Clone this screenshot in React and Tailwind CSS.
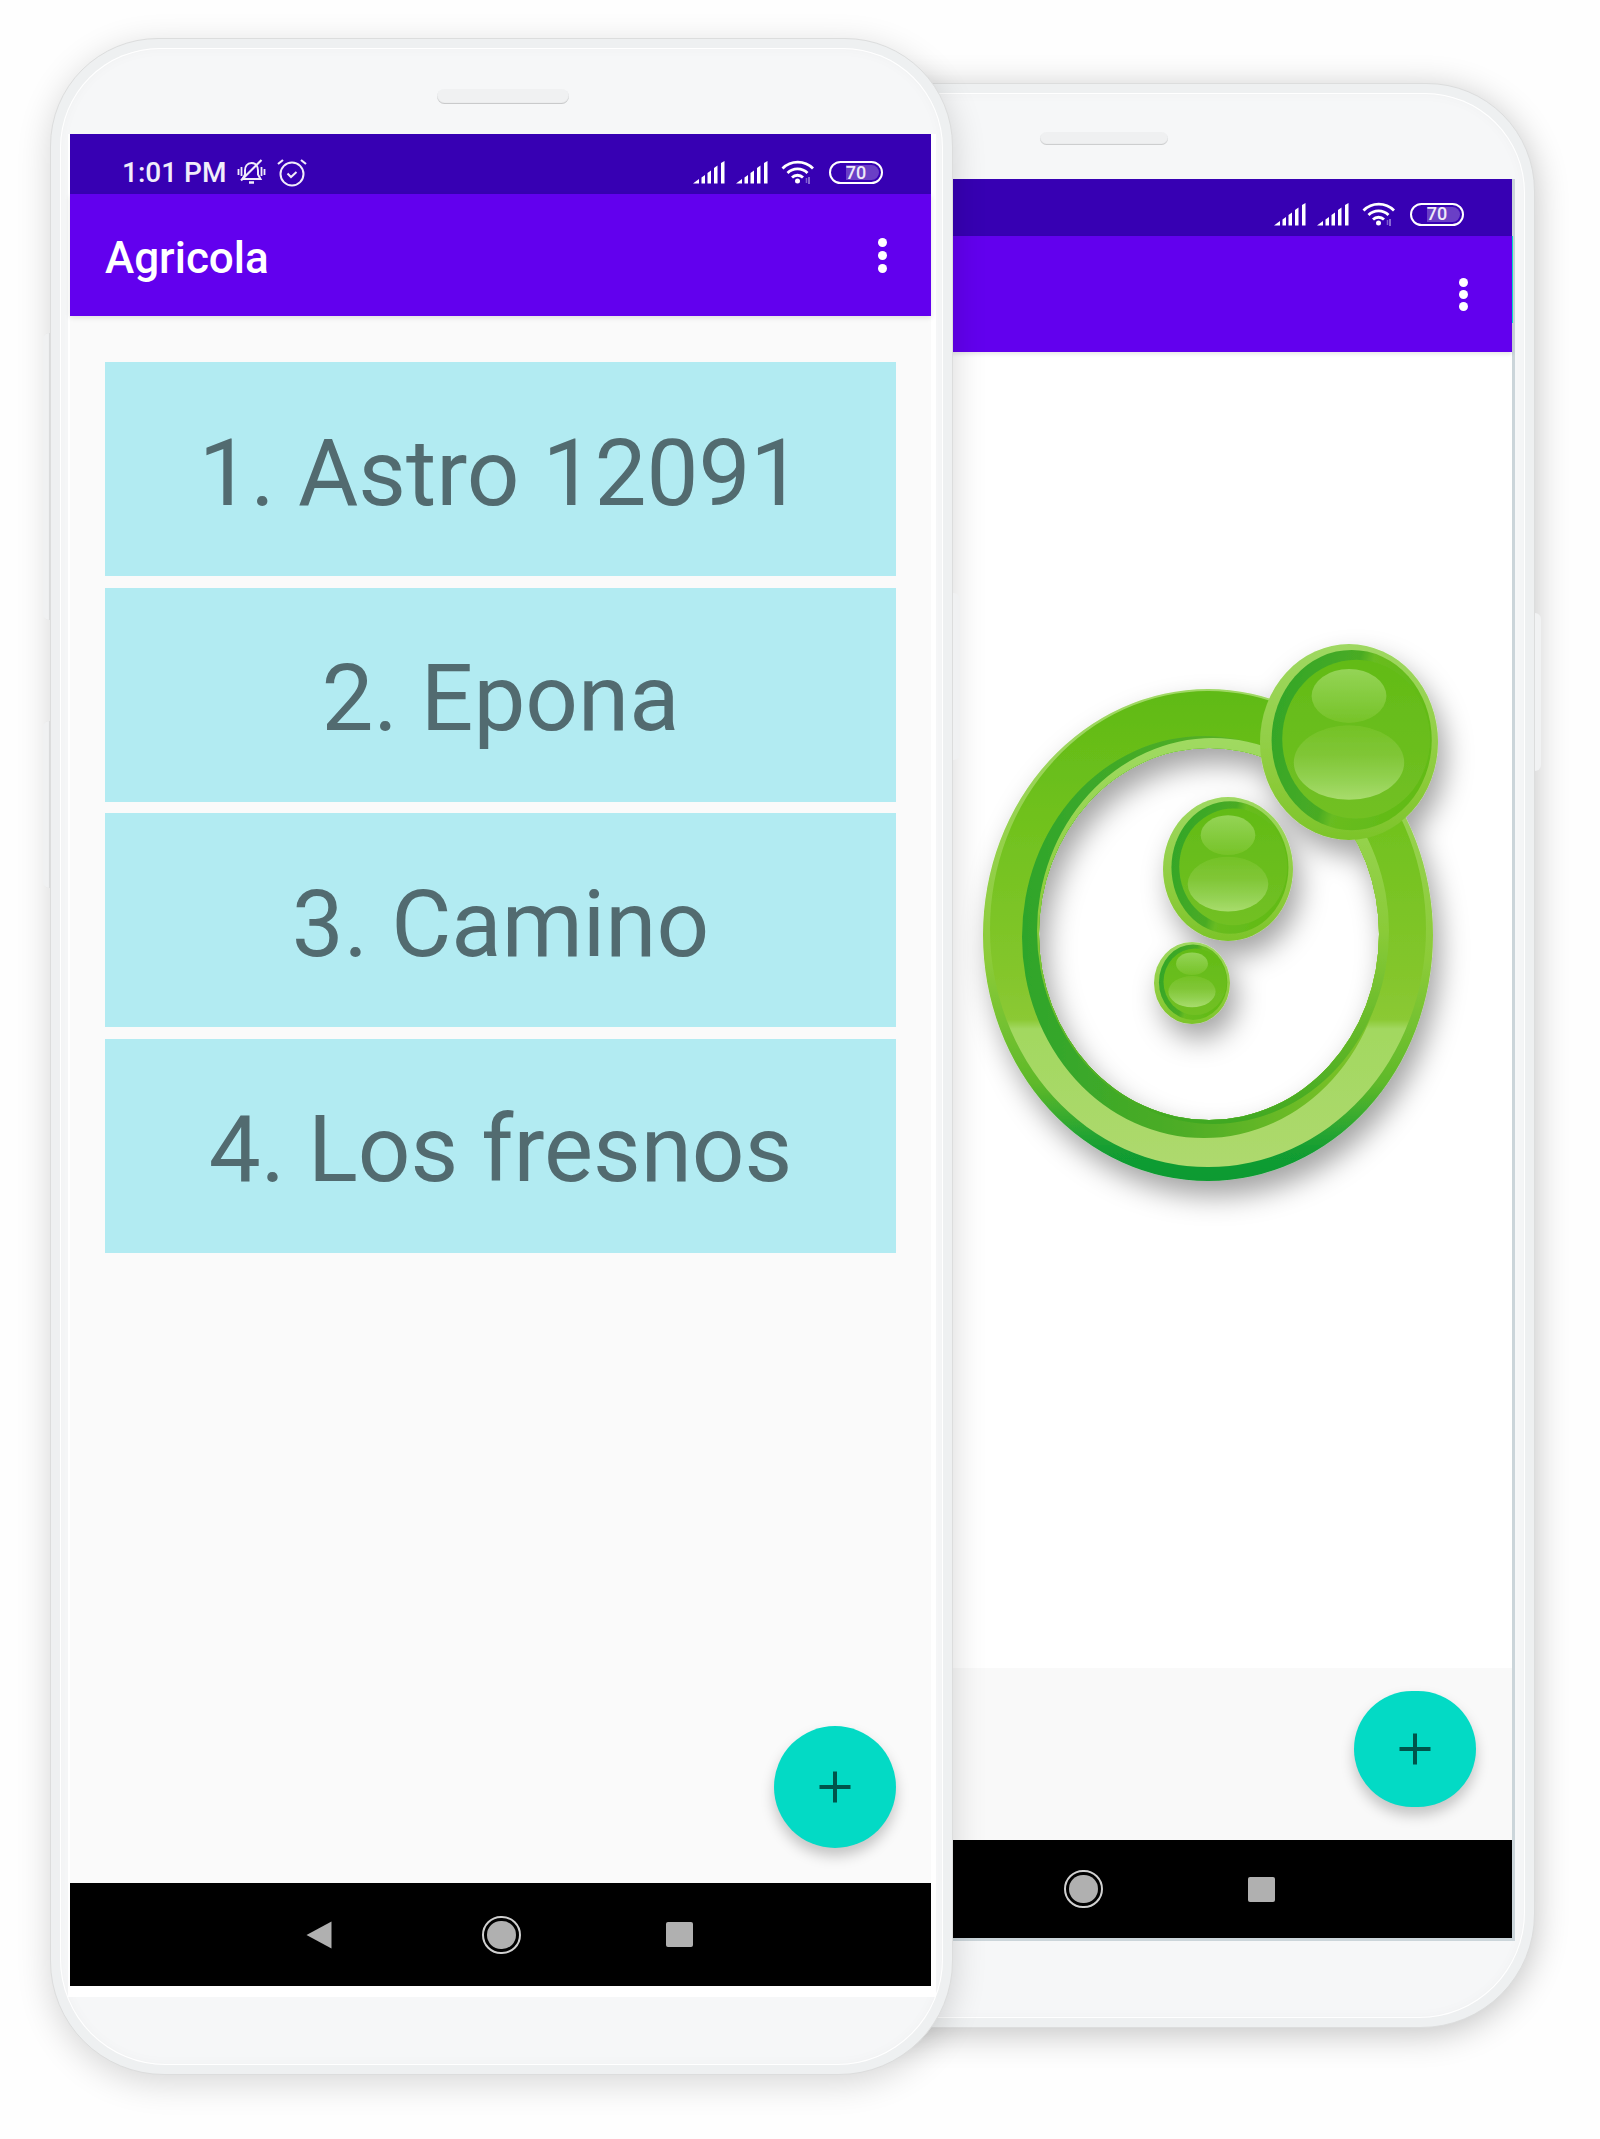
import React from 'react';

const roboto = 'font-[family-name:Roboto,sans-serif]';

const places = ['1. Astro 12091', '2. Epona', '3. Camino', '4. Los fresnos'];

function ell(cx, cy, rx, ry) {
  return `M${cx - rx} ${cy}a${rx} ${ry} 0 1 0 ${rx * 2} 0a${rx} ${ry} 0 1 0 ${-rx * 2} 0z`;
}

function Signal() {
  return (
    <svg width="32" height="23" viewBox="0 0 32 23" fill="#fff">
      <polygon points="0,22.5 6,18 6,22.5" />
      <path d="M8.5 16.5l3.5-2.5v8.5H8.5z" />
      <path d="M14.5 12l3.5-2.5v13h-3.5z" />
      <path d="M21 7l3.5-2.5v18H21z" />
      <path d="M28 2l3.5-2v22.5H28z" />
    </svg>
  );
}

function Wifi() {
  return (
    <svg width="34" height="25" viewBox="0 0 34 25" fill="none" stroke="#fff" strokeWidth="2.8">
      <path d="M1.5 8.5c8.5-8.5 22-8.5 30.500 0" />
      <path d="M6.500 13c5.500-5.500 14.500-5.500 20 0" />
      <path d="M11 17.500c3-3 8-3 11 0" />
      <circle cx="16.500" cy="21" r="2.500" fill="#fff" stroke="none" />
      <path d="M28 17v7" stroke="#a48be0" strokeWidth="1.500" />
      <path d="M25.500 18v5" stroke="#7d5cd0" strokeWidth="1.500" />
    </svg>
  );
}

function Battery() {
  return (
    <div className="relative flex h-[23px] w-[54px] items-center justify-center rounded-full border-2 border-white">
      <div className="absolute top-[2px] right-[2px] bottom-[2px] left-[15px] rounded-r-full bg-[#6a3fc6]" />
      <span className="relative text-[18px] font-medium leading-none text-[#eeeaf8]">70</span>
    </div>
  );
}

function StatusIcons() {
  return (
    <div className="ml-auto flex items-center gap-[11px]">
      <Signal />
      <Signal />
      <div className="ml-[2px] mr-[3px]">
        <Wifi />
      </div>
      <Battery />
    </div>
  );
}

function BellOff() {
  return (
    <svg width="29" height="27" viewBox="0 0 29 27" fill="none" stroke="#f1edfa" strokeWidth="2">
      <path d="M14.500 4c-4.500 0-6.500 3.500-6.500 7.500v4l-2.500 4.500h18l-2.500-4.500v-4c0-4-2-7.500-6.500-7.500z" />
      <path d="M12 23.500h5" strokeWidth="2.500" />
      <path d="M4 21.500L24.500 1" strokeWidth="2.200" />
      <path d="M1.500 10v6M4.500 8v9M24.500 8v9M27.500 10v6" strokeWidth="1.800" />
    </svg>
  );
}

function AlarmCheck() {
  return (
    <svg width="30" height="29" viewBox="0 0 30 29" fill="none" stroke="#f1edfa" strokeWidth="2">
      <circle cx="15" cy="16" r="11.500" />
      <path d="M10.500 15.500l3.500 3.500 5.500-5" />
      <path d="M1 6l5-4M29 6l-5-4" strokeWidth="2.200" />
    </svg>
  );
}

function Dots({ gap }) {
  return (
    <div className={`ml-auto flex flex-col ${gap}`}>
      <div className="h-[9px] w-[9px] rounded-full bg-white" />
      <div className="h-[9px] w-[9px] rounded-full bg-white" />
      <div className="h-[9px] w-[9px] rounded-full bg-white" />
    </div>
  );
}

function NavBar({ height }) {
  return (
    <div className={`flex ${height} shrink-0 items-center justify-center bg-black pr-[2px]`}>
      <svg width="26" height="28" viewBox="0 0 26 28" className="mr-[150px]">
        <path d="M25.500 0.500V27.500L0.500 14z" fill="#b0b0b0" />
      </svg>
      <div className="mr-[145px] flex h-[38px] w-[39px] items-center justify-center rounded-full border-2 border-[#d0d0d0]">
        <div className="h-[28px] w-[29px] rounded-full bg-[#b0b0b0]" />
      </div>
      <div className="h-[25px] w-[27px] rounded-[2px] bg-[#b0b0b0]" />
    </div>
  );
}

function Fab({ size, offset }) {
  return (
    <div className={`absolute ${size} ${offset} flex items-center justify-center rounded-full bg-[#03dac5] shadow-[0_8px_14px_rgba(0,0,0,0.22)]`}>
      <svg width="32" height="32" viewBox="0 0 32 32" stroke="#00544b" strokeWidth="4">
        <path d="M0.500 16h31M16 0.500v31" />
      </svg>
    </div>
  );
}

function Ball({ cx, cy, rx, ry }) {
  return (
    <g>
      <ellipse cx={cx} cy={cy} rx={rx} ry={ry} fill="url(#rim)" />
      <ellipse cx={cx + rx * 0.03} cy={cy - ry * 0.02} rx={rx * 0.9} ry={ry * 0.92} fill="url(#ballDark)" />
      <ellipse cx={cx + rx * 0.08} cy={cy - ry * 0.03} rx={rx * 0.83} ry={ry * 0.81} fill="url(#ballBody)" />
      <ellipse cx={cx} cy={cy - ry * 0.47} rx={rx * 0.42} ry={ry * 0.275} fill="url(#shineTop)" />
      <ellipse cx={cx} cy={cy + ry * 0.21} rx={rx * 0.62} ry={ry * 0.38} fill="url(#shineLow)" />
    </g>
  );
}

function Logo() {
  const hole = ell(1209, 934, 170, 186);
  return (
    <svg width="530" height="620" viewBox="950 620 530 620" className="ml-[298px] mt-[268px] shrink-0 overflow-visible">
      <defs>
        <linearGradient id="rim" x1="0" y1="0" x2="0" y2="1">
          <stop offset="0" stopColor="#9fd862" />
          <stop offset="0.7" stopColor="#8ccb3a" />
          <stop offset="1" stopColor="#7cc42a" />
        </linearGradient>
        <linearGradient id="ringBase" x1="0" y1="0" x2="0" y2="1">
          <stop offset="0" stopColor="#a0d866" />
          <stop offset="0.55" stopColor="#8ccb38" />
          <stop offset="0.8" stopColor="#5fb92a" />
          <stop offset="0.94" stopColor="#129d33" />
          <stop offset="1" stopColor="#0f9a30" />
        </linearGradient>
        <linearGradient id="ringBody" x1="0" y1="0" x2="0" y2="1">
          <stop offset="0" stopColor="#60ba15" />
          <stop offset="0.3" stopColor="#72c21f" />
          <stop offset="0.6" stopColor="#84c62c" />
          <stop offset="0.69" stopColor="#8bc934" />
          <stop offset="0.71" stopColor="#a2d860" />
          <stop offset="1" stopColor="#aed96e" />
        </linearGradient>
        <linearGradient id="ringDark" x1="0" y1="0" x2="1" y2="0">
          <stop offset="0" stopColor="#2ea52c" />
          <stop offset="0.45" stopColor="#4fad25" />
          <stop offset="0.75" stopColor="#6cbb25" />
          <stop offset="1" stopColor="#84c62c" />
        </linearGradient>
        <linearGradient id="ringInner" x1="0" y1="0" x2="0" y2="1">
          <stop offset="0" stopColor="#a0da62" />
          <stop offset="0.5" stopColor="#8acb38" />
          <stop offset="0.8" stopColor="#5fb627" />
          <stop offset="1" stopColor="#3fa822" />
        </linearGradient>
        <linearGradient id="ballDark" x1="0" y1="0" x2="1" y2="0.3">
          <stop offset="0" stopColor="#2ea52a" />
          <stop offset="0.52" stopColor="#4aab24" />
          <stop offset="0.6" stopColor="#68bc20" />
          <stop offset="1" stopColor="#62bb16" />
        </linearGradient>
        <linearGradient id="ballBody" x1="0" y1="0" x2="0" y2="1">
          <stop offset="0" stopColor="#62bb16" />
          <stop offset="1" stopColor="#72c024" />
        </linearGradient>
        <linearGradient id="shineTop" x1="0" y1="0" x2="0" y2="1">
          <stop offset="0" stopColor="#94d456" />
          <stop offset="1" stopColor="#76c328" />
        </linearGradient>
        <linearGradient id="shineLow" x1="0" y1="0" x2="0" y2="1">
          <stop offset="0" stopColor="#74c226" />
          <stop offset="0.4" stopColor="#80c636" />
          <stop offset="0.75" stopColor="#94d254" />
          <stop offset="1" stopColor="#a8dc6c" />
        </linearGradient>
        <filter id="logoShadow" x="-20%" y="-20%" width="140%" height="140%">
          <feDropShadow dx="7" dy="15" stdDeviation="14" floodColor="#000" floodOpacity="0.36" />
        </filter>
      </defs>
      <g filter="url(#logoShadow)">
        <path d={`${ell(1208, 935, 225, 246)} ${hole}`} fill="url(#ringBase)" fillRule="evenodd" />
        <path d={`${ell(1208, 929, 218, 238)} ${hole}`} fill="url(#ringBody)" fillRule="evenodd" />
        <path d={`${ell(1204, 937, 182, 201)} ${hole}`} fill="url(#ringDark)" fillRule="evenodd" />
        <path d={`${ell(1213, 931, 176, 193)} ${hole}`} fill="url(#ringInner)" fillRule="evenodd" />
        <Ball cx={1349} cy={742} rx={89} ry={98} />
        <Ball cx={1228} cy={869} rx={65} ry={72} />
        <Ball cx={1192} cy={983} rx={38} ry={41} />
      </g>
    </svg>
  );
}

function FrontScreen() {
  return (
    <div className="flex h-full flex-col bg-white pb-[11px] pl-[2px] pr-[5px]">
      <div className="flex h-[60px] shrink-0 items-center bg-[#3700b3] pl-[52px] pr-[48px] pt-[17px] text-[#f1edfa]">
        <span className="text-[28px] font-medium leading-none">1:01 PM</span>
        <div className="ml-[11px]">
          <BellOff />
        </div>
        <div className="ml-[11px]">
          <AlarmCheck />
        </div>
        <StatusIcons />
      </div>
      <div className="relative z-10 flex h-[122px] shrink-0 items-center bg-[#6200ee] pl-[35px] pr-[44px] shadow-[0_2px_5px_rgba(0,0,0,0.1)]">
        <span className="pt-[6px] text-[44px] font-medium leading-none text-white">Agricola</span>
        <Dots gap="gap-[4px]" />
      </div>
      <div className="relative flex flex-1 flex-col gap-[11.500px] bg-[#fafafa] px-[35px] pt-[46px]">
        {places.map((name) => (
          <div key={name} className="flex h-[214px] items-center justify-center bg-[#b2ebf2] pt-[10px] text-[92.5px] leading-none text-[#526b70]">
            {name}
          </div>
        ))}
        <Fab size="h-[122px] w-[122px]" offset="right-[35px] bottom-[35px]" />
      </div>
      <NavBar height="h-[103px]" />
    </div>
  );
}

function BackScreen() {
  return (
    <div className="relative flex h-[1762px] flex-col border-b-[3px] border-r-[3px] border-[#cbd5da]">
      <div className="flex h-[57px] shrink-0 items-center bg-[#3700b3] pr-[48px] pt-[13px]">
        <StatusIcons />
      </div>
      <div className="relative z-10 flex h-[116px] shrink-0 items-center bg-[#6200ee] pr-[44px] shadow-[0_2px_4px_rgba(0,0,0,0.1)]">
        <Dots gap="gap-[3px]" />
        <div className="absolute -right-[1px] top-0 h-[87px] w-[1px] bg-[#03dac5]" />
      </div>
      <div className="flex flex-1 flex-col bg-white">
        <Logo />
      </div>
      <div className="relative h-[172px] shrink-0 bg-[#f9f9f9]">
        <Fab size="h-[116px] w-[122px]" offset="right-[36px] bottom-[33px]" />
      </div>
      <NavBar height="h-[98px]" />
    </div>
  );
}

function Phone({ className, speaker, children }) {
  return (
    <div className={`absolute ${className} rounded-[108px_108px_114px_114px] border border-[#dcdddd] bg-[#eef0f1] p-[9px]`}>
      <div className="h-full rounded-[100px_100px_106px_106px] bg-[#f6f7f8] shadow-[inset_0_0_0_1px_#fff,inset_0_0_14px_rgba(0,0,0,0.03)]">
        <div className={speaker} />
        {children}
      </div>
    </div>
  );
}

export default function App() {
  return (
    <div className={`relative h-[2139px] w-[1600px] overflow-hidden bg-[#fefefe] ${roboto}`}>
      {/* back phone */}
      <Phone
        className="left-[634px] top-[83px] z-0 h-[1945px] w-[901px] shadow-[0_6px_34px_rgba(0,0,0,0.24)]"
        speaker="absolute left-[405px] top-[48px] h-[13px] w-[128px] rounded-full bg-[#eff0f1] shadow-[inset_0_-1px_1px_rgba(0,0,0,0.16)]"
      >
        <div className="absolute left-[17px] top-[95px] w-[863px]">
          <BackScreen />
        </div>
      </Phone>
      <div className="absolute left-[1535px] top-[613px] h-[158px] w-[6px] rounded-r-md bg-[#f1f2f3]" />

      {/* front phone */}
      <Phone
        className="left-[50px] top-[38px] z-20 h-[2037px] w-[903px] shadow-[0_8px_34px_rgba(0,0,0,0.16)]"
        speaker="absolute left-[386px] top-[50px] h-[15px] w-[132px] rounded-full bg-[#f0f1f2] shadow-[inset_0_-1px_1px_rgba(0,0,0,0.18)]"
      >
        <div className="absolute left-[17px] top-[95px] h-[1863px] w-[868px]">
          <FrontScreen />
        </div>
      </Phone>
      <div className="absolute left-[43px] top-[333px] z-20 h-[287px] w-[7px] rounded-l-md bg-[#f0f1f2] shadow-[inset_-1px_0_1px_rgba(0,0,0,0.1)]" />
      <div className="absolute left-[43px] top-[721px] z-20 h-[167px] w-[7px] rounded-l-md bg-[#f0f1f2] shadow-[inset_-1px_0_1px_rgba(0,0,0,0.1)]" />
      <div className="absolute left-[953px] top-[593px] z-20 h-[167px] w-[7px] rounded-r-md bg-[#f0f1f2]" />
    </div>
  );
}
